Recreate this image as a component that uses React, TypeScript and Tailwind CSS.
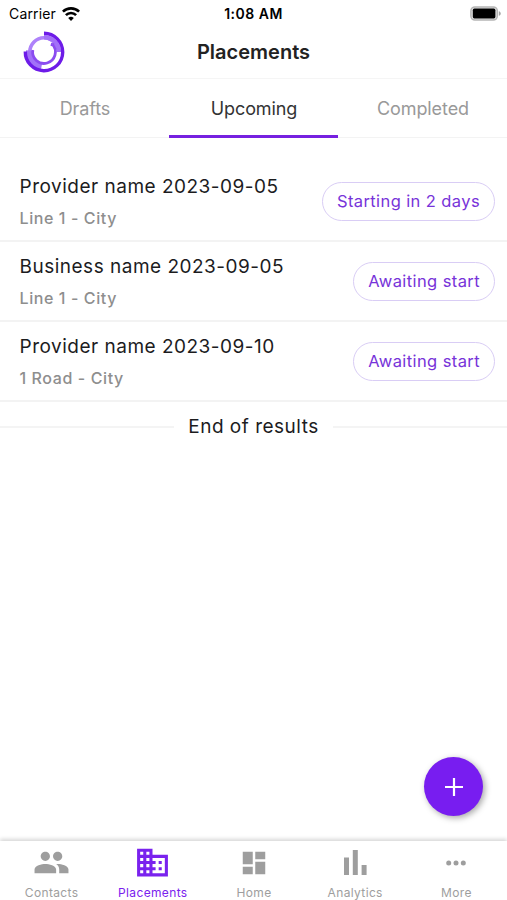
import { MdBusiness, MdDashboard, MdPeople } from 'react-icons/md';

const tabs = [
  { name: 'Drafts', active: false },
  { name: 'Upcoming', active: true },
  { name: 'Completed', active: false },
];

const placements = [
  { title: 'Provider name 2023-09-05', address: 'Line 1 - City', status: 'Starting in 2 days' },
  { title: 'Business name 2023-09-05', address: 'Line 1 - City', status: 'Awaiting start' },
  { title: 'Provider name 2023-09-10', address: '1 Road - City', status: 'Awaiting start' },
];

const navigation = [
  { name: 'Contacts', icon: <MdPeople size={37} />, active: false },
  { name: 'Placements', icon: <MdBusiness size={37} />, active: true },
  { name: 'Home', icon: <MdDashboard size={30} />, active: false },
  { name: 'Analytics', icon: <BarsIcon />, active: false },
  { name: 'More', icon: <DotsIcon />, active: false },
];

function BarsIcon() {
  return (
    <svg width="23" height="25" viewBox="0 0 23 25" fill="currentColor">
      <path d="M0 7.5h5V25H0zM8.8 0h5v25h-5zM17.6 15h5v10h-5z" />
    </svg>
  );
}

function DotsIcon() {
  return (
    <svg width="20" height="6" viewBox="0 0 20 6" fill="currentColor">
      <circle cx="2.7" cy="3" r="2.5" />
      <circle cx="10" cy="3" r="2.5" />
      <circle cx="17.3" cy="3" r="2.5" />
    </svg>
  );
}

function WifiIcon() {
  return (
    <svg width="18" height="14" viewBox="0 0 18 14" fill="none" stroke="#000" strokeWidth="2.6">
      <path d="M0.9 4.7a11.5 11.5 0 0 1 16.2 0" />
      <path d="M3.9 8.1a7.2 7.2 0 0 1 10.2 0" />
      <path d="M9 14l-2.8-3a4 4 0 0 1 5.6 0z" fill="#000" stroke="none" />
    </svg>
  );
}

function BatteryIcon() {
  return (
    <svg width="32" height="15" viewBox="0 0 32 15">
      <rect x="0.9" y="0.9" width="26.4" height="13.2" rx="4" fill="#e4e4e4" stroke="#b5b5b5" strokeWidth="1.5" />
      <rect x="2.8" y="2.6" width="22.6" height="9.8" rx="1.6" fill="#000" />
      <path d="M28.8 5.2c2.6.6 2.6 4 0 4.6z" fill="#a5a5a5" />
    </svg>
  );
}

function Logo() {
  return (
    <svg width="42" height="42" viewBox="0 0 42 42" fill="none">
      <path d="M6.8 21A14.2 14.2 0 0 1 21 6.8a14.2 14.2 0 0 1 8 2.5" stroke="#ae82fa" strokeWidth="3.6" />
      <path d="M21 6.2A14.8 14.8 0 0 1 35.8 21" stroke="#a271f8" strokeWidth="4.6" />
      <path d="M6 19.5a15 15 0 0 0 12.5 16.3" stroke="#a271f8" strokeWidth="6" />
      <path d="M21 2.3A18.7 18.7 0 1 1 2.3 20.5" stroke="#6d1be8" strokeWidth="3.4" />
      <path d="M9.8 19A11.4 11.4 0 1 0 29.5 13.4" stroke="#8b4cf0" strokeWidth="2.8" />
      <path d="M28.2 15l.6-2.4 2.4.6" stroke="#8b4cf0" strokeWidth="1.6" />
    </svg>
  );
}

export default function App() {
  return (
    <div className="relative flex h-[900px] w-[507px] flex-col overflow-hidden bg-white font-['Inter',sans-serif] text-[#1c1c1e]">
      <div className="grid h-7 grid-cols-[1fr_auto_1fr] items-center pb-px pl-[9px] pr-[5px] text-black">
        <div className="flex items-center gap-1.5 text-[14px] tracking-[0.15px]">
          Carrier
          <WifiIcon />
        </div>
        <div className="pr-1 text-center text-[14px] font-semibold tracking-[0.5px]">1:08 AM</div>
        <div className="flex justify-end">
          <BatteryIcon />
        </div>
      </div>

      <header className="grid h-[51px] grid-cols-3 items-center border-b border-[#f5f5f5] pb-0.5">
        <div className="pl-[23px]">
          <Logo />
        </div>
        <h1 className="text-center text-[20px] font-semibold text-[#222]">Placements</h1>
      </header>

      <div className="grid h-[59px] grid-cols-3 border-b border-[#f3f3f3]">
        {tabs.map((tab) => (
          <button
            key={tab.name}
            className={`-mb-px flex items-center justify-center border-b-[3px] pt-0.5 pl-px text-[18px] tracking-[-0.1px] ${
              tab.active ? 'border-[#7620e0] text-[#333]' : 'border-transparent text-[#999]'
            }`}
          >
            {tab.name}
          </button>
        ))}
      </div>

      <main className="flex-1 pt-6">
        {placements.map((placement) => (
          <div
            key={placement.title}
            className="flex h-20 items-center justify-between border-b-2 border-[#f3f3f3] pl-[19.5px] pr-3"
          >
            <div className="pt-[3px]">
              <div className="text-[19px] leading-8 tracking-[0.5px]">{placement.title}</div>
              <div className="text-[16px] leading-[31px] font-medium tracking-[0.6px] text-[#8e8e8e]">{placement.address}</div>
            </div>
            <span className="mt-px flex h-[39.5px] items-center rounded-full border-[1.5px] border-[#d9cdf5] px-3.5 text-[16.5px] tracking-[0.4px] text-[#7733d9]">
              {placement.status}
            </span>
          </div>
        ))}
        <div className="flex h-[50px] items-center gap-3.5 text-[19px] tracking-[0.5px]">
          <div className="mb-px h-0.5 flex-1 bg-[#f4f4f4]" />
          End of results
          <div className="mb-px h-0.5 flex-1 bg-[#f4f4f4]" />
        </div>
      </main>

      <button className="absolute right-6 bottom-[84px] flex size-[59px] items-center justify-center rounded-full bg-[#781df0] shadow-[2px_2px_6px_rgba(0,0,0,0.35)]">
        <svg width="18" height="18" viewBox="0 0 18 18" stroke="#fff" strokeWidth="2.2">
          <path d="M9 0v18M0 9h18" />
        </svg>
      </button>

      <nav className="grid h-[59px] grid-cols-5 bg-white pl-px shadow-[0_-2px_4px_rgba(0,0,0,0.16)]">
        {navigation.map((item) => (
          <div
            key={item.name}
            className={`flex flex-col items-center ${item.active ? 'text-[#7a22ee]' : 'text-[#9e9e9e]'}`}
          >
            <div className="flex h-11 items-center pb-px">{item.icon}</div>
            <div className="text-[12px] leading-4 tracking-[0.35px]">{item.name}</div>
          </div>
        ))}
      </nav>
    </div>
  );
}
